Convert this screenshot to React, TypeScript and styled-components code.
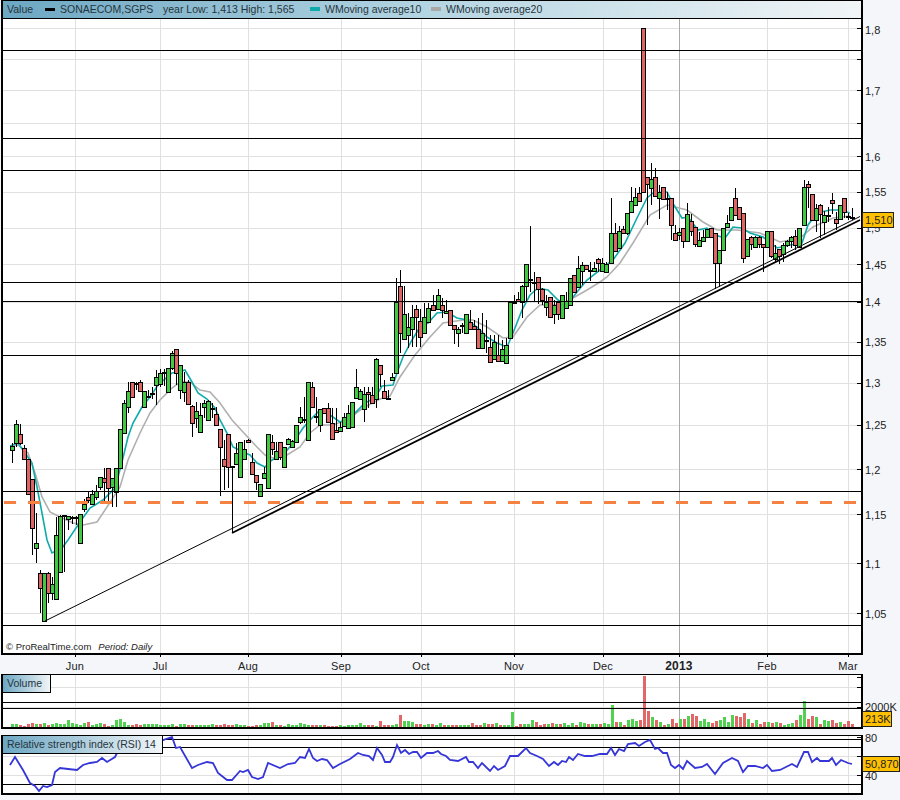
import React from "react";
import styled, { createGlobalStyle } from "styled-components";

const GlobalStyle = createGlobalStyle`
  html, body { margin: 0; padding: 0; background: #f5f6fa; }
  body { font-family: "Liberation Sans", Arial, sans-serif; }
`;

const Page = styled.div`
  width: 900px;
  height: 800px;
  overflow: hidden;
  display: flex;
  flex-direction: column;
  background: #f5f6fa;
  color: #222;
  font-size: 10.5px;
`;

const Row = styled.div<{ $gap?: number }>`
  display: flex;
  margin-top: ${(p) => p.$gap ?? 0}px;
`;

const Frame = styled.div<{ $h: number }>`
  position: relative;
  box-sizing: border-box;
  width: 862px;
  height: ${(p) => p.$h}px;
  margin-left: 1px;
  background: #fff;
  border-left: 2px solid #000;
  border-right: 2px solid #000;
  border-bottom: 2px solid #000;
  border-top: 1px solid #000;
`;

const Plot = styled.svg`
  display: block;
`;

const Legend = styled.div`
  box-sizing: border-box;
  height: 18px;
  display: flex;
  align-items: center;
  padding-left: 4px;
  padding-bottom: 1px;
  border-bottom: 1px solid #000;
  background: linear-gradient(90deg, #6ca7c3 0%, #b5d5e2 50%, #f1f5f7 100%);
  color: #26343c;
  white-space: nowrap;
`;

const LegendText = styled.span<{ $w: number }>`
  width: ${(p) => p.$w}px;
  flex: none;
`;

const LegendMark = styled.i<{ $color: string; $h: number }>`
  flex: none;
  width: 10px;
  height: ${(p) => p.$h}px;
  margin-right: 5px;
  background: ${(p) => p.$color};
`;

const Credit = styled.div`
  position: absolute;
  left: 3px;
  bottom: 0;
  line-height: 12px;
  font-size: 9.5px;
  white-space: nowrap;
  color: #222;
  em { margin-left: 7px; }
`;

const Caption = styled.div<{ $w: number }>`
  position: absolute;
  left: 0;
  top: 0;
  box-sizing: border-box;
  width: ${(p) => p.$w}px;
  height: 18px;
  line-height: 16px;
  padding-left: 4px;
  border-right: 1px solid #000;
  border-bottom: 1px solid #000;
  background: linear-gradient(90deg, #6ca7c3 0%, #f1f5f7 100%);
  color: #26343c;
  white-space: nowrap;
`;

const Axis = styled.div`
  position: relative;
  flex: 1;
`;

const AxisLabel = styled.span<{ $y: number }>`
  position: absolute;
  left: 2px;
  top: ${(p) => p.$y - 7}px;
  line-height: 14px;
  font-size: 11px;
`;

const Badge = styled.div<{ $y: number; $w: number }>`
  position: absolute;
  left: -1px;
  top: ${(p) => p.$y}px;
  box-sizing: border-box;
  width: ${(p) => p.$w}px;
  height: 16px;
  line-height: 14px;
  padding-left: 2px;
  font-size: 11px;
  background: #ffc000;
  border: 1px solid #222;
  white-space: nowrap;
  overflow: hidden;
`;

const DateRow = styled.div`
  position: relative;
  height: 19px;
`;

const DateTick = styled.span<{ $x: number }>`
  position: absolute;
  left: ${(p) => p.$x}px;
  top: 0;
  width: 1px;
  height: 2px;
  background: #000;
`;

const DateLabel = styled.span<{ $x: number; $bold?: boolean }>`
  position: absolute;
  left: ${(p) => p.$x - 30}px;
  width: 60px;
  top: 4px;
  text-align: center;
  line-height: 14px;
  font-weight: ${(p) => (p.$bold ? 700 : 400)};
  font-size: ${(p) => (p.$bold ? 12 : 11)}px;
  letter-spacing: 0.2px;
`;

type C = [number, number, number, number, number, string];

const candles: C[] = [
[12,446,450,443,463,"g"],[16,424,443,420,447,"g"],[20,434,443,424,445,"r"],[24,448,459,445,460,"r"],[28,459,494,459,495,"r"],
[32,479,528,480,555,"r"],[36,543,548,513,563,"g"],[40,573,588,570,613,"r"],[44,573,621,573,621,"g"],[48,573,593,572,603,"r"],
[52,584,593,577,600,"g"],[56,535,599,517,600,"g"],[60,516,572,515,572,"g"],[64,515,516,515,572,"g"],[68,516,519,516,530,"g"],
[72,517,518,516,524,"g"],[76,517,518,516,525,"g"],[80,514,543,514,543,"g"],[84,504,509,499,512,"g"],[88,497,500,491,503,"r"],
[92,494,504,490,505,"g"],[96,491,497,485,500,"g"],[100,477,487,477,490,"g"],[104,478,482,468,502,"r"],[108,468,488,468,502,"r"],
[112,478,487,478,507,"g"],[116,468,492,468,507,"g"],[120,429,468,429,468,"g"],[124,403,433,400,433,"g"],[128,391,407,382,413,"g"],
[132,382,397,382,397,"r"],[136,383,384,382,390,"r"],[140,382,391,380,392,"r"],[144,391,407,391,408,"g"],[148,396,397,390,397,"g"],
[152,393,394,387,399,"g"],[156,377,385,370,405,"g"],[160,373,384,369,387,"g"],[164,372,373,369,386,"g"],[168,368,392,368,392,"g"],
[172,353,368,351,370,"g"],[176,349,373,349,385,"r"],[180,365,390,365,399,"g"],[184,382,392,372,402,"g"],[188,382,404,380,405,"r"],
[192,406,423,405,437,"r"],[196,411,418,402,428,"g"],[200,415,432,403,433,"g"],[204,403,407,400,418,"g"],[208,401,420,400,420,"g"],
[212,408,409,403,418,"g"],[216,414,425,407,426,"r"],[220,429,447,429,496,"r"],[224,459,466,440,490,"r"],[228,434,467,434,488,"r"],
[232,466,467,467,533,"r"],[236,453,464,443,465,"g"],[240,442,477,442,478,"g"],[244,449,459,440,460,"g"],[248,440,442,439,443,"r"],
[252,462,474,453,475,"r"],[256,475,482,475,490,"r"],[260,484,496,484,497,"g"],[264,473,478,467,479,"g"],[268,434,488,434,488,"g"],
[272,442,449,435,455,"r"],[276,451,459,442,460,"g"],[280,442,457,442,460,"r"],[284,447,467,447,467,"g"],[288,439,444,438,445,"g"],
[292,441,447,440,448,"g"],[296,425,442,425,442,"g"],[300,417,422,407,424,"g"],[304,419,420,397,423,"g"],[308,382,440,382,440,"g"],
[312,387,407,382,408,"r"],[316,416,417,397,423,"r"],[320,409,425,409,432,"g"],[324,408,413,408,414,"r"],[328,408,422,403,423,"r"],
[332,423,439,408,440,"r"],[336,430,432,408,433,"r"],[340,427,431,422,432,"g"],[344,417,426,413,427,"g"],[348,413,428,405,429,"g"],
[352,402,427,402,428,"g"],[356,387,398,369,398,"g"],[360,391,399,389,400,"g"],[364,394,409,387,422,"g"],[368,392,394,387,408,"r"],
[372,395,403,387,404,"r"],[376,359,399,358,408,"g"],[380,365,374,365,387,"r"],[384,391,398,380,399,"r"],[388,398,399,390,399,"r"],
[392,377,380,373,381,"g"],[396,302,373,278,374,"g"],[400,286,333,270,353,"r"],[404,314,339,286,340,"g"],[408,327,335,313,348,"g"],
[412,317,329,305,347,"g"],[416,309,317,305,347,"r"],[420,321,337,309,347,"r"],[424,317,333,303,334,"g"],[428,308,322,303,323,"g"],
[433,305,310,295,311,"r"],[438,295,309,289,310,"g"],[442,305,310,298,318,"r"],[446,311,313,300,314,"g"],[450,310,325,310,326,"r"],
[454,325,329,325,344,"r"],[458,329,333,327,347,"g"],[462,325,326,323,333,"g"],[466,314,333,314,334,"g"],[470,322,329,310,330,"r"],
[474,326,329,320,330,"r"],[478,329,348,318,349,"r"],[482,333,348,313,349,"g"],[486,340,341,320,353,"r"],[490,347,362,335,363,"r"],
[494,342,359,335,360,"g"],[498,355,361,335,362,"r"],[502,349,361,340,362,"g"],[506,345,363,338,364,"g"],[510,302,338,302,339,"g"],
[514,302,303,295,304,"r"],[518,299,301,292,302,"r"],[522,286,302,285,318,"g"],[526,264,286,264,302,"g"],[530,279,280,226,292,"g"],
[534,282,283,272,302,"r"],[538,277,289,277,304,"r"],[542,289,300,288,305,"r"],[546,302,307,295,316,"g"],[550,297,317,297,318,"r"],
[554,305,314,300,324,"g"],[558,302,314,302,320,"r"],[562,295,318,295,318,"g"],[566,301,308,292,309,"g"],[570,278,305,278,306,"g"],
[574,275,292,275,293,"r"],[578,268,287,256,288,"g"],[582,265,271,262,285,"g"],[586,265,269,265,270,"r"],[590,270,271,262,281,"g"],
[594,268,271,262,272,"g"],[598,259,263,258,272,"r"],[602,263,271,258,272,"g"],[606,264,272,262,273,"g"],[611,233,263,198,263,"g"],
[615,233,251,223,252,"r"],[619,231,248,226,249,"g"],[623,229,233,226,234,"r"],[627,213,233,213,235,"g"],[631,201,212,187,213,"g"],
[635,197,205,188,206,"g"],[639,193,201,187,202,"r"],[643,28,192,28,192,"r"],[647,177,184,177,225,"r"],[651,179,188,163,205,"g"],
[655,177,196,168,197,"r"],[659,192,198,185,219,"g"],[663,187,199,187,200,"r"],[667,198,199,192,210,"g"],[671,198,225,198,240,"r"],
[675,233,240,225,241,"r"],[679,232,235,228,240,"g"],[683,228,241,228,248,"r"],[687,214,241,203,241,"g"],[691,221,231,214,236,"r"],
[695,227,244,227,247,"r"],[699,240,246,232,247,"g"],[703,237,241,230,242,"g"],[707,229,237,229,238,"g"],[711,228,237,228,238,"r"],
[715,233,263,233,289,"r"],[719,250,263,250,287,"g"],[723,228,250,228,251,"g"],[727,223,227,215,228,"g"],[731,207,220,207,221,"g"],
[735,198,215,188,216,"r"],[739,207,219,207,220,"r"],[743,213,258,213,263,"r"],[747,239,256,239,257,"g"],[751,237,244,236,250,"r"],
[755,237,247,236,248,"g"],[759,237,244,236,248,"r"],[763,244,247,244,272,"r"],[767,231,247,231,248,"g"],[771,231,256,231,258,"r"],
[775,253,259,245,263,"g"],[779,249,256,249,264,"r"],[783,245,254,243,262,"g"],[787,241,245,240,247,"g"],[791,237,241,236,248,"g"],
[795,236,245,230,250,"r"],[799,228,247,228,248,"g"],[804,187,225,180,226,"g"],[808,184,187,181,208,"r"],[812,194,220,194,221,"r"],
[816,208,220,204,232,"g"],[820,205,214,204,238,"r"],[824,215,222,211,235,"g"],[828,215,216,207,222,"g"],[832,200,203,193,214,"r"],
[836,219,223,212,230,"r"],[840,205,219,205,220,"g"],[844,198,212,198,218,"r"],[848,216,217,213,220,"r"],[852,217,218,208,220,"r"],
];

const ma10 = "10,446 18,443 25,453 32,463 37,487 42,513 47,540 52,553 62,548 68,540 80,522 90,508 103,500 115,488 122,462 128,437 133,423 142,407 150,397 158,385 172,373 178,372 185,370 192,382 198,393 207,399 215,408 220,420 227,433 233,447 243,452 250,455 257,463 265,467 272,460 283,455 293,443 303,428 313,417 320,410 330,415 340,422 350,418 365,403 375,398 382,386 393,385 398,370 403,357 412,340 420,327 428,323 437,313 447,312 457,318 467,320 477,327 487,337 497,343 507,347 513,333 522,310 530,295 538,288 548,290 558,300 567,305 577,292 587,280 600,270 613,260 625,243 637,218 647,198 653,193 667,192 672,202 682,218 688,217 698,230 707,228 715,235 725,238 733,227 742,228 750,233 763,237 777,248 790,245 802,243 808,225 817,213 830,210 840,210 850,213";
const ma20 = "10,446 18,445 28,453 35,473 42,497 50,512 60,517 73,523 83,525 97,522 107,507 120,487 128,460 140,433 150,413 160,400 172,388 180,382 190,382 200,390 210,392 220,403 232,420 243,432 255,445 265,455 273,458 287,455 300,447 310,433 320,425 333,425 347,420 363,408 380,399 390,396 400,377 415,355 430,337 443,323 463,320 473,320 487,327 503,338 513,337 527,317 540,305 560,305 573,298 587,290 600,282 607,277 620,263 633,243 650,215 667,205 687,210 703,222 717,230 737,230 760,233 780,242 800,238 813,227 833,218 850,216";
const rsi = "10,765 15,757 23,770 30,783 35,786 39,791 43,786 47,787 52,785 55,772 60,768 68,769 77,770 83,765 90,763 97,762 102,758 107,762 115,757 117,753 140,742 163,740 172,737 176,748 180,747 192,768 198,765 207,762 213,763 218,773 227,780 232,780 240,771 243,772 248,770 252,777 258,779 263,777 268,763 280,768 288,764 295,763 300,757 305,758 309,749 313,758 317,761 322,759 327,760 333,768 340,764 350,759 358,753 363,755 369,756 373,760 377,748 382,755 385,762 390,762 393,757 397,745 401,753 405,750 409,754 413,752 417,752 421,758 427,753 433,753 438,751 441,754 446,756 450,760 458,761 466,757 469,762 473,762 478,768 482,763 490,771 494,766 498,770 505,766 510,756 518,756 526,748 530,753 537,756 543,759 549,766 554,762 558,765 562,761 566,762 569,757 573,760 578,754 585,756 592,756 600,754 607,754 611,748 615,755 619,749 624,751 628,744 635,743 639,746 645,742 650,740 655,749 658,748 663,753 667,753 671,765 675,768 679,765 683,769 687,761 695,768 702,767 707,764 715,774 723,763 732,758 738,761 743,772 748,766 755,766 763,768 767,765 772,771 780,770 792,764 797,767 804,752 808,752 812,762 817,758 820,761 829,761 832,758 836,765 841,760 848,763 852,764";

const volumes = [
3,3,2,1,3,4,3,3,4,2,3,4,3,3,7,4,3,2,4,5,2,3,4,3,1,2,7,8,5,2,2,3,2,3,3,3,3,2,2,2,3,1,3,3,2,2,2,2,
2,2,3,2,2,3,2,2,3,2,2,1,1,2,2,4,4,5,2,2,1,3,2,2,4,3,2,2,2,2,2,1,1,1,2,1,2,2,2,4,2,2,2,1,6,2,2,2,3,12,6,6,5,3,3,2,3,3,2,4,2,2,2,2,2,2,2,4,2,2,4,3,3,4,2,2,2,15,1,3,3,3,7,5,2,3,3,4,3,3,4,2,4,2,5,4,3,3,3,3,
4,3,22,5,5,2,7,8,6,7,51,16,10,7,5,2,3,8,4,8,8,11,13,11,6,8,5,4,6,7,10,5,12,11,10,14,8,4,7,3,5,5,4,5,4,2,3,4,7,12,26,8,11,10,3,7,6,7,4,5,3,6,3,
];

const priceGridY = [28, 59, 90, 123, 156, 192, 228, 264, 302, 342, 383, 425, 469, 514, 563, 613];
const priceLabels: [string, number][] = [
  ["1,8", 30], ["1,7", 91], ["1,6", 157], ["1,55", 192], ["1,5", 228], ["1,45", 265], ["1,4", 302],
  ["1,35", 342], ["1,3", 383], ["1,25", 425], ["1,2", 470], ["1,15", 515], ["1,1", 564], ["1,05", 614],
];
const blackY = [50, 138, 170, 282, 301, 355, 491, 625];
const months: [string, number, boolean?][] = [
  ["Jun", 75], ["Jul", 160], ["Aug", 248], ["Sep", 341], ["Oct", 421], ["Nov", 514], ["Dec", 603],
  ["2013", 679, true], ["Feb", 767], ["Mar", 848],
];

const L = 3;
const R = 861;

const VerticalGrid: React.FC<{ y0: number; y1: number }> = ({ y0, y1 }) => (
  <g shapeRendering="crispEdges">
    {months.map(([n, x, b]) => (
      <line key={n} x1={x + 0.5} x2={x + 0.5} y1={y0} y2={y1} stroke={b ? "#a9a9a9" : "#e0e0e0"} />
    ))}
  </g>
);

const HLines: React.FC<{ ys: number[]; color: string }> = ({ ys, color }) => (
  <g shapeRendering="crispEdges">
    {ys.map((y) => (
      <line key={y} x1={L} x2={R} y1={y + 0.5} y2={y + 0.5} stroke={color} />
    ))}
  </g>
);

const Candles: React.FC = () => (
  <g shapeRendering="crispEdges" stroke="#000">
    {candles.map(([x, t, b, wt, wb, c]) => (
      <g key={x}>
        <line x1={x + 0.5} x2={x + 0.5} y1={wt} y2={wb} />
        <rect x={x - 1.5} y={t + 0.5} width={4} height={Math.max(1, b - t)} fill={c === "g" ? "#41c941" : "#e06464"} />
      </g>
    ))}
  </g>
);

const nearest = (x: number) => {
  let best = candles[0];
  for (const c of candles) if (Math.abs(c[0] - x) < Math.abs(best[0] - x)) best = c;
  return best[5];
};

const App: React.FC = () => (
  <Page>
    <GlobalStyle />
    <Row>
      <Frame $h={655}>
        <Legend>
          <LegendText $w={38}>Value</LegendText>
          <LegendMark $color="#000" $h={3} />
          <LegendText $w={103}>SONAECOM,SGPS</LegendText>
          <LegendText $w={147}>year Low: 1,413 High: 1,565</LegendText>
          <LegendMark $color="#10aaaa" $h={4} />
          <LegendText $w={106}>WMoving average10</LegendText>
          <LegendMark $color="#a8a8a8" $h={4} />
          <LegendText $w={110}>WMoving average20</LegendText>
        </Legend>
        <Plot width={858} height={634} viewBox="3 19 858 634">
          <HLines ys={priceGridY} color="#e0e0e0" />
          <VerticalGrid y0={19} y1={653} />
          <g shapeRendering="crispEdges">
            {priceGridY.map((y) => (
              <line key={y} x1={857} x2={861} y1={y + 0.5} y2={y + 0.5} stroke="#000" />
            ))}
          </g>
          <polyline points={ma20} fill="none" stroke="#b0b0b0" strokeWidth={1.6} />
          <polyline points={ma10} fill="none" stroke="#10aaaa" strokeWidth={1.6} />
          <Candles />
          <HLines ys={blackY} color="#000" />
          <line x1={4} x2={861} y1={502.5} y2={502.5} stroke="#f58240" strokeWidth={3} strokeDasharray="12 12" shapeRendering="crispEdges" />
          <line x1={45} y1={621} x2={232} y2={528.5} stroke="#000" strokeWidth={1} />
          <line x1={232} y1={528.5} x2={860} y2={216.5} stroke="#000" strokeWidth={1} />
          <line x1={232} y1={533} x2={860} y2={220} stroke="#000" strokeWidth={1.8} />
        </Plot>
        <Credit>
          © ProRealTime.com<em>Period: Daily</em>
        </Credit>
      </Frame>
      <Axis>
        {priceLabels.map(([t, y]) => (
          <AxisLabel key={t} $y={y}>{t}</AxisLabel>
        ))}
        <Badge $y={212} $w={32}>1,510</Badge>
      </Axis>
    </Row>

    <DateRow>
      {months.map(([n, x, b]) => (
        <React.Fragment key={n}>
          <DateTick $x={x} />
          <DateLabel $x={x} $bold={b}>{n}</DateLabel>
        </React.Fragment>
      ))}
    </DateRow>

    <Row>
      <Frame $h={55}>
        <Plot width={858} height={52} viewBox="3 675 858 52">
          <HLines ys={[687, 707]} color="#e0e0e0" />
          <VerticalGrid y0={675} y1={727} />
          <g shapeRendering="crispEdges">
            {volumes.map((h, i) => {
              const x = 12 + 4 * i;
              return <rect key={i} x={x - 1} y={727 - h} width={3} height={h} fill={nearest(x) === "g" ? "#4fd24f" : "#e06868"} />;
            })}
            {[677, 687, 707].map((y) => (
              <line key={y} x1={857} x2={861} y1={y + 0.5} y2={y + 0.5} stroke="#000" />
            ))}
          </g>
          <HLines ys={[702, 708]} color="#000" />
        </Plot>
        <Caption $w={48}>Volume</Caption>
      </Frame>
      <Axis>
        <AxisLabel $y={33}>2000K</AxisLabel>
        <Badge $y={37} $w={30}>213K</Badge>
      </Axis>
    </Row>

    <Row $gap={6}>
      <Frame $h={60}>
        <Plot width={858} height={57} viewBox="3 736 858 57">
          <HLines ys={[756, 775]} color="#e0e0e0" />
          <VerticalGrid y0={736} y1={793} />
          <HLines ys={[739, 747, 784]} color="#000" />
          <g shapeRendering="crispEdges">
            {[737, 756, 775].map((y) => (
              <line key={y} x1={857} x2={861} y1={y + 0.5} y2={y + 0.5} stroke="#000" />
            ))}
          </g>
          <polyline points={rsi} fill="none" stroke="#3535d8" strokeWidth={1.8} />
        </Plot>
        <Caption $w={160}>Relative strength index (RSI) 14</Caption>
      </Frame>
      <Axis>
        <AxisLabel $y={3}>80</AxisLabel>
        <AxisLabel $y={41}>40</AxisLabel>
        <Badge $y={21} $w={38}>50,8704</Badge>
      </Axis>
    </Row>
  </Page>
);

export default App;
